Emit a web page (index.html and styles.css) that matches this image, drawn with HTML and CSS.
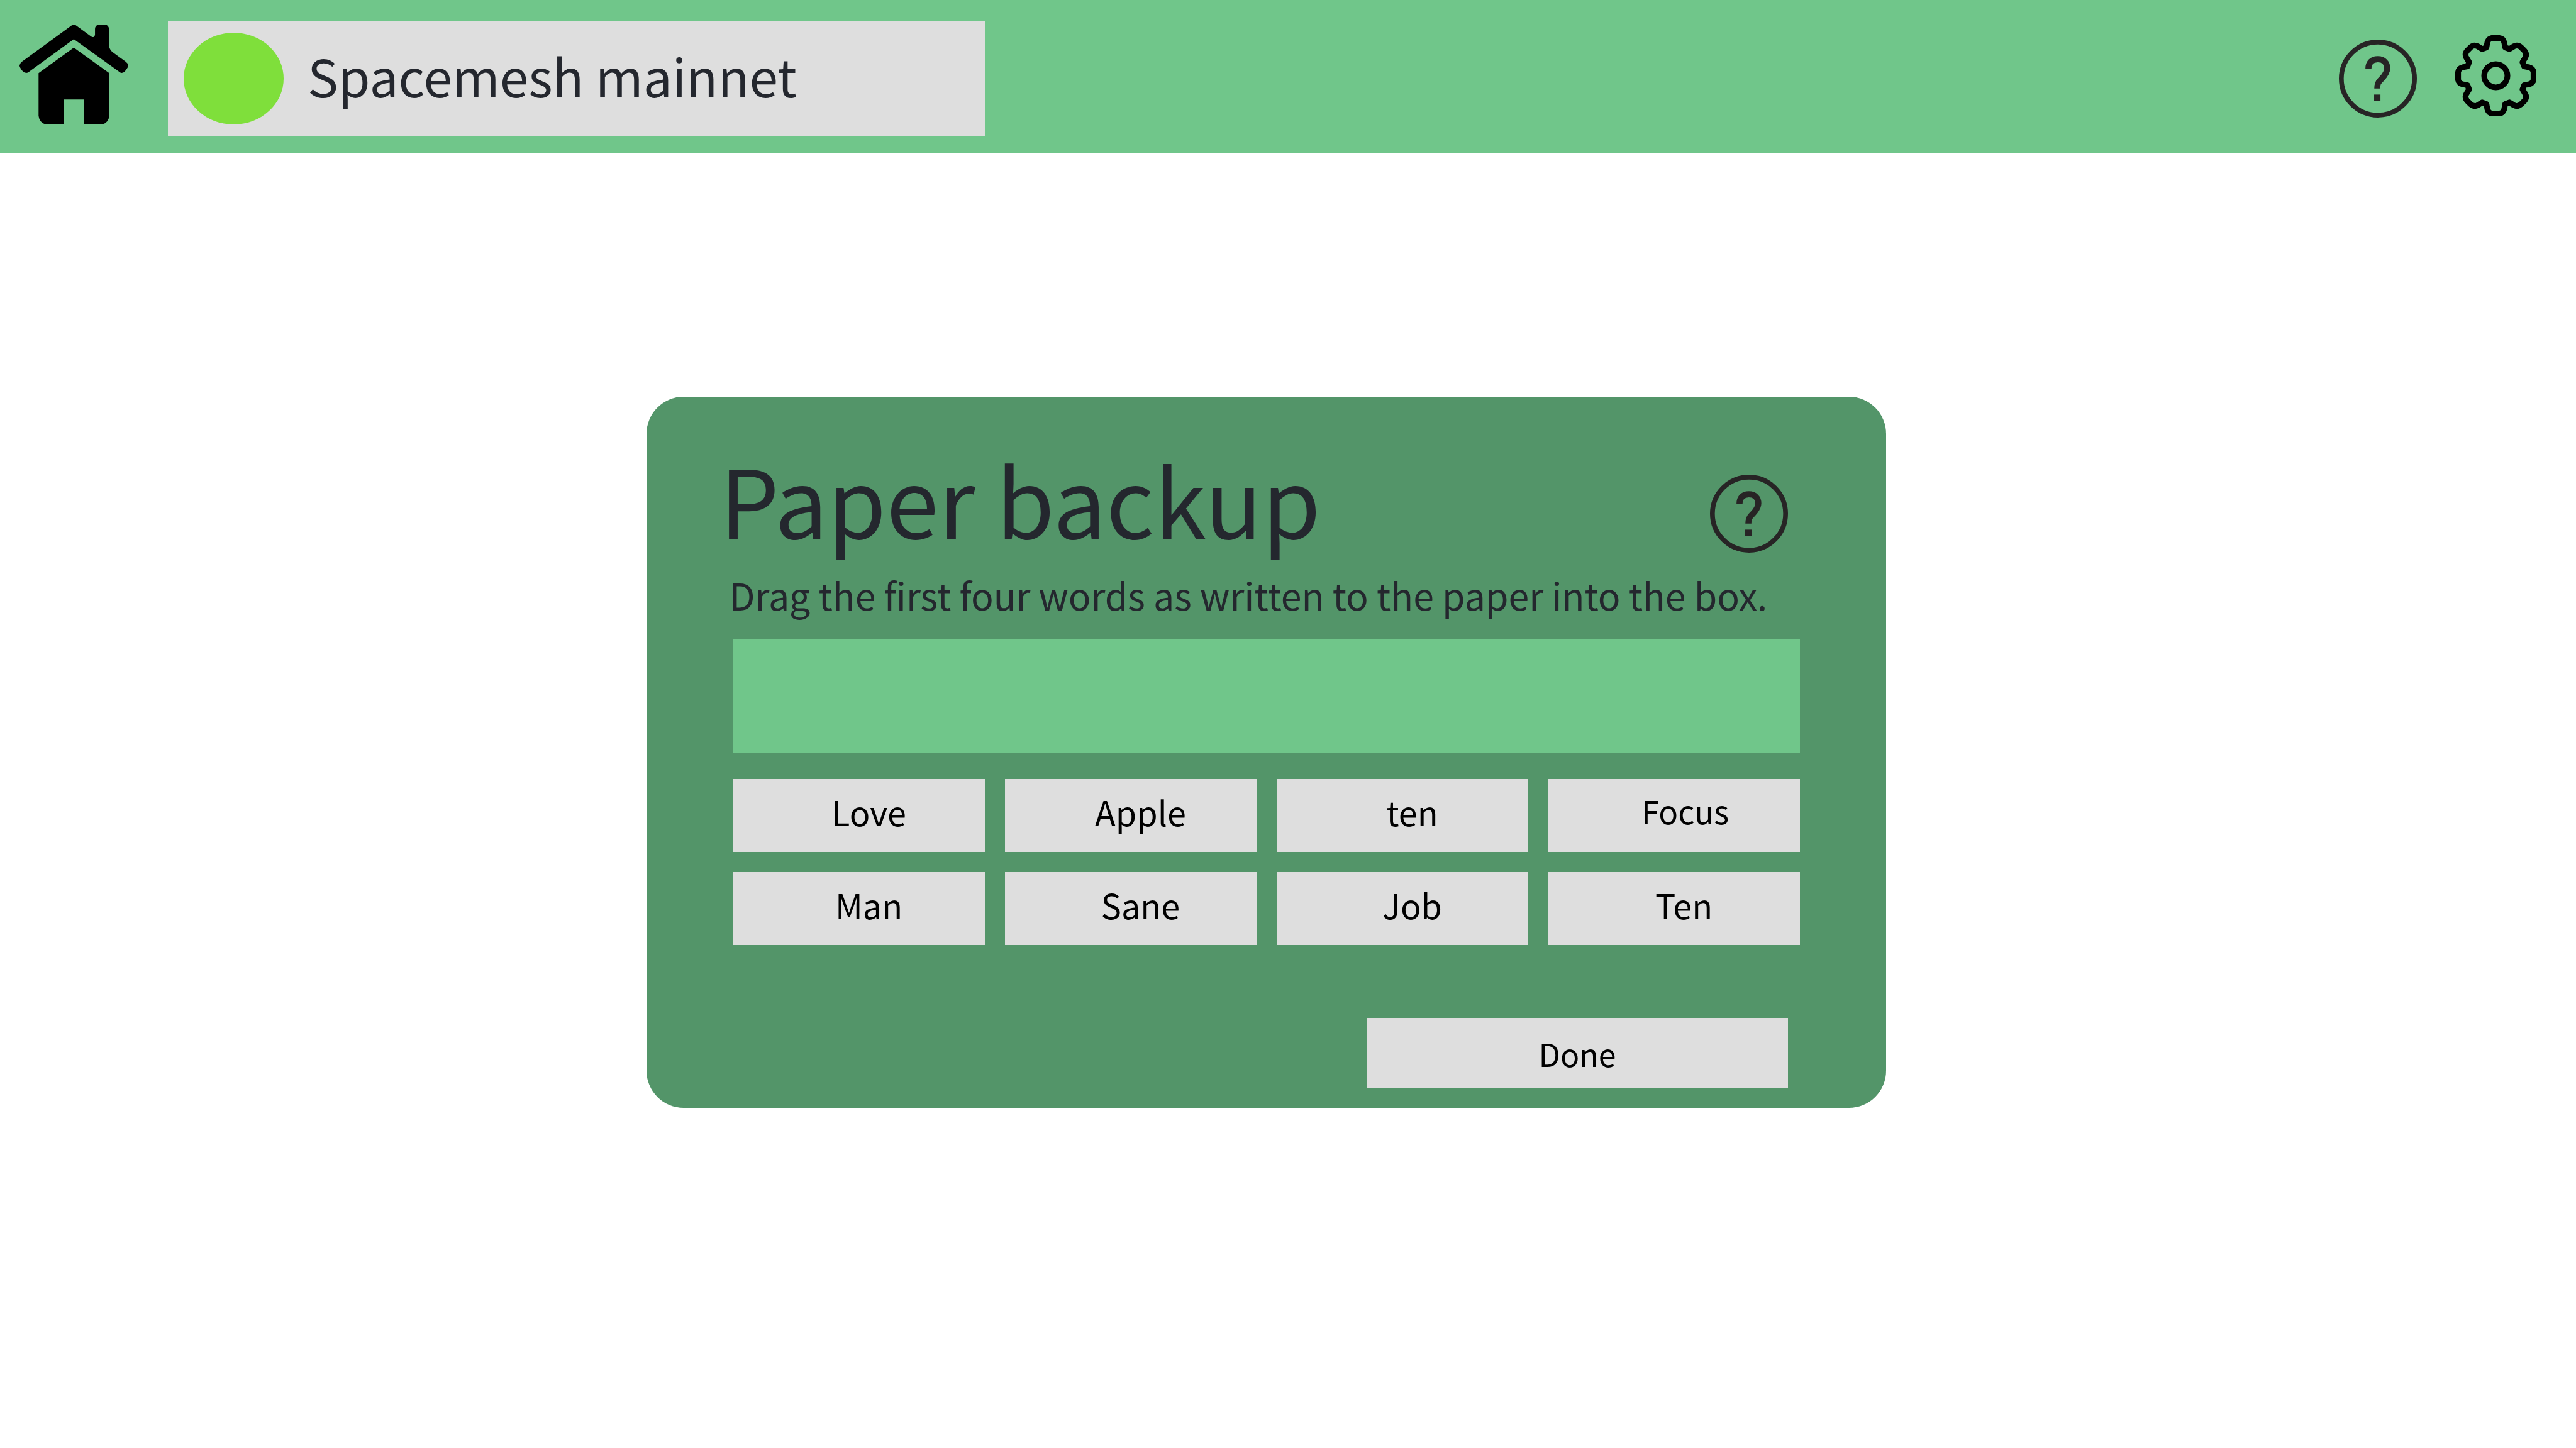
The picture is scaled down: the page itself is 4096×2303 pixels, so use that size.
FILE: index.html
```html
<!DOCTYPE html>
<html lang="en">
<head>
<meta charset="utf-8">
<title>Paper backup</title>
<link rel="stylesheet" href="styles.css">
</head>
<body>
<svg class="defs" aria-hidden="true">
  <symbol id="help" viewBox="21 22 518 518">
    <circle cx="280" cy="281" r="243" fill="none" stroke="currentColor" stroke-width="32"/>
    <path d="M217 215C217 174 241 152 279 152C319 152 342 176 342 212C342 237 330 255 308 279L292 296C279 309 276 320 276 347" fill="none" stroke="currentColor" stroke-width="40"/>
    <rect x="255" y="387" width="42" height="42" fill="currentColor"/>
  </symbol>
</svg>
<header class="topbar">
  <a class="home" href="#" aria-label="Home">
    <svg viewBox="41 41 719 661" width="173" height="159">
      <path d="M388 45Q400 38 412 45L513 119Q521 126 530 124Q540 120 540 108V70Q541 48 561 42H611Q631 48 632 70V178Q635 208 658 225L744 287Q758 297 760 313Q758 325 738 350Q724 365 708 359L400 138L96 359Q78 365 62 350Q42 325 41 313Q43 297 56 287Z"/>
      <path d="M400 194L634 362V645Q630 690 588 702H466V537H336V702H214Q172 690 167 645V362Z"/>
    </svg>
  </a>
  <div class="network">
    <span class="status"></span>
    <span class="network-name">Spacemesh mainnet</span>
  </div>
  <button class="icon-button help" type="button" aria-label="Help"><svg><use href="#help"/></svg></button>
  <button class="icon-button settings" type="button" aria-label="Settings">
    <svg viewBox="-269 -269 538 538" fill="none" stroke="#000" stroke-width="38" stroke-linejoin="round" stroke-linecap="round">
      <path id="cog" d="M-24-250H24Q48-248 56-221L62-188L90-177L121-196Q144-208 166-190L190-166Q208-144 196-121L177-90L188-62L221-56Q248-48 250-24"/>
      <use href="#cog" transform="rotate(90)"/>
      <use href="#cog" transform="rotate(180)"/>
      <use href="#cog" transform="rotate(270)"/>
      <circle r="77"/>
    </svg>
  </button>
</header>
<main class="stage">
  <section class="card">
    <div class="card-head">
      <h1>Paper backup</h1>
      <button class="icon-button help" type="button" aria-label="About paper backup"><svg><use href="#help"/></svg></button>
    </div>
    <p class="hint">Drag the first four words as written to the paper into the box.</p>
    <div class="dropbox"></div>
    <div class="words">
      <button type="button" class="word">Love</button>
      <button type="button" class="word">Apple</button>
      <button type="button" class="word">ten</button>
      <button type="button" class="word small">Focus</button>
      <button type="button" class="word">Man</button>
      <button type="button" class="word">Sane</button>
      <button type="button" class="word">Job</button>
      <button type="button" class="word">Ten</button>
    </div>
    <button type="button" class="done">Done</button>
  </section>
</main>
</body>
</html>
```
FILE: styles.css
```css
* { box-sizing: border-box; }

body {
  margin: 0;
  background: #fff;
  color: #24272e;
  font-family: "Noto Sans CJK SC", "Noto Sans CJK JP", sans-serif;
}

button {
  border: 0;
  padding: 0;
  border-radius: 0;
  background: #dedede;
  color: #000;
  font-family: inherit;
}

svg { display: block; }

.defs { position: absolute; width: 0; height: 0; }

.topbar {
  display: flex;
  align-items: center;
  height: 244px;
  padding: 6px 63px 0 31px;
  background: #70c68a;
}

.home { margin: 0 63px 14px 0; color: #000; }

.network {
  display: flex;
  align-items: center;
  flex: 0 1 1299px;
  height: 184px;
  padding-left: 25px;
  margin-right: auto;
  background: #dedede;
}

.status {
  width: 159px;
  height: 146px;
  margin-right: 38px;
  border-radius: 50%;
  background: #7fdf3b;
}

.network-name {
  padding-bottom: 10px;
  font-size: 82px;
  line-height: 120px;
  white-space: nowrap;
}

.icon-button { flex: none; background: none; }
.icon-button svg { width: 100%; height: 100%; }
.help { width: 124px; height: 124px; color: #272425; }
.settings { width: 129px; height: 129px; margin: 0 0 10px 61px; }

.stage {
  display: grid;
  grid-template-columns: 1028fr 1971fr 1097fr;
  padding-top: 387px;
}

.card {
  grid-column: 2;
  padding: 86px 137px 32px 138px;
  border-radius: 59px;
  background: #539569;
}

.card-head {
  display: flex;
  justify-content: space-between;
  align-items: flex-end;
  height: 162px;
  margin: 0 19px 0 -22px;
}

h1 {
  align-self: flex-start;
  margin: 0;
  font-size: 150px;
  font-weight: 400;
  line-height: 150px;
}

.hint {
  margin: 31px 0 35px -6px;
  font-size: 59px;
  line-height: 72px;
  white-space: nowrap;
}

.dropbox { height: 180px; background: #70c68a; }

.words {
  display: grid;
  grid-template-columns: repeat(4, 1fr);
  gap: 32px;
  margin-top: 42px;
}

.word {
  height: 116px;
  padding: 0 0 12px 31px;
  font-size: 54px;
  line-height: 80px;
}

.word.small {
  padding: 0 0 16px 35px;
  font-size: 51px;
}

.done {
  display: block;
  width: 670px;
  height: 111px;
  margin: 116px 19px 0 auto;
  font-size: 50px;
  line-height: 80px;
}
```
